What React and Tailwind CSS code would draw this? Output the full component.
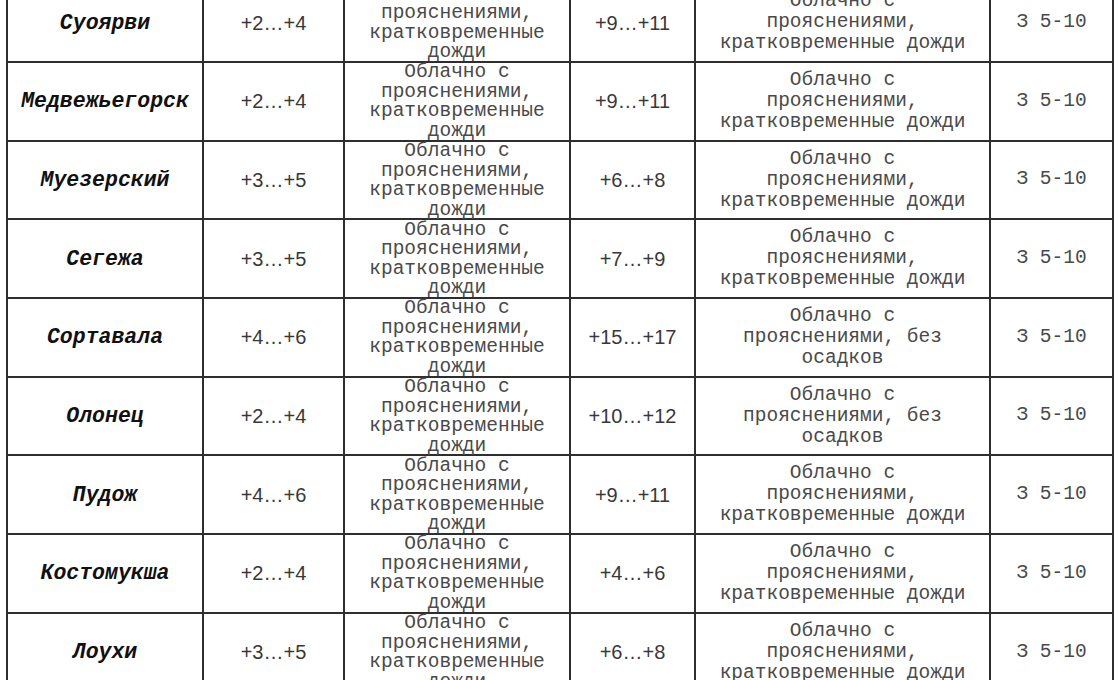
const desc3 = ['Облачно с', 'прояснениями,', 'кратковременные', 'дожди'];
const rain5 = ['Облачно с', 'прояснениями,', 'кратковременные дожди'];
const dry5 = ['Облачно с', 'прояснениями, без', 'осадков'];

const rows = [
  { city: 'Суоярви', night: '+2…+4', day: '+9…+11', d5: rain5 },
  { city: 'Медвежьегорск', night: '+2…+4', day: '+9…+11', d5: rain5 },
  { city: 'Муезерский', night: '+3…+5', day: '+6…+8', d5: rain5 },
  { city: 'Сегежа', night: '+3…+5', day: '+7…+9', d5: rain5 },
  { city: 'Сортавала', night: '+4…+6', day: '+15…+17', d5: dry5 },
  { city: 'Олонец', night: '+2…+4', day: '+10…+12', d5: dry5 },
  { city: 'Пудож', night: '+4…+6', day: '+9…+11', d5: rain5 },
  { city: 'Костомукша', night: '+2…+4', day: '+4…+6', d5: rain5 },
  { city: 'Лоухи', night: '+3…+5', day: '+6…+8', d5: rain5 },
];

function Cell({ className = '', children }) {
  return (
    <td className="border-2 border-[#2e2e2e] p-0">
      <div className={`h-[76.7px] flex flex-col items-center justify-center text-center overflow-visible ${className}`}>
        {children}
      </div>
    </td>
  );
}

function Lines({ lines }) {
  return lines.map((l, i) => (
    <span key={i} className="block whitespace-nowrap">{l}</span>
  ));
}

export default function App() {
  const mono = "font-['Liberation_Mono',monospace] text-[19.5px] text-[#4a4a4a]";
  const sans = "font-['Liberation_Sans',Arial,sans-serif] text-[20px] text-[#383838]";

  return (
    <div className="w-[1120px] h-[680px] overflow-hidden bg-white">
      <table className="table-fixed border-collapse w-[1108px] ml-[6px] -mt-[17.7px]">
        <colgroup>
          <col className="w-[196px]" />
          <col className="w-[141px]" />
          <col className="w-[226px]" />
          <col className="w-[125px]" />
          <col className="w-[295px]" />
          <col className="w-[123px]" />
        </colgroup>
        <tbody>
          {rows.map((r) => (
            <tr key={r.city}>
              <Cell className="font-['Liberation_Mono',monospace] font-bold italic text-[21.5px] text-[#111]">
                {r.city}
              </Cell>
              <Cell className={sans}>{r.night}</Cell>
              <Cell className={`${mono} leading-[19.5px] pt-[2px]`}>
                <Lines lines={desc3} />
              </Cell>
              <Cell className={sans}>{r.day}</Cell>
              <Cell className={`${mono} leading-[21px]`}>
                <Lines lines={r.d5} />
              </Cell>
              <Cell className={mono}>З 5-10</Cell>
            </tr>
          ))}
        </tbody>
      </table>
    </div>
  );
}
